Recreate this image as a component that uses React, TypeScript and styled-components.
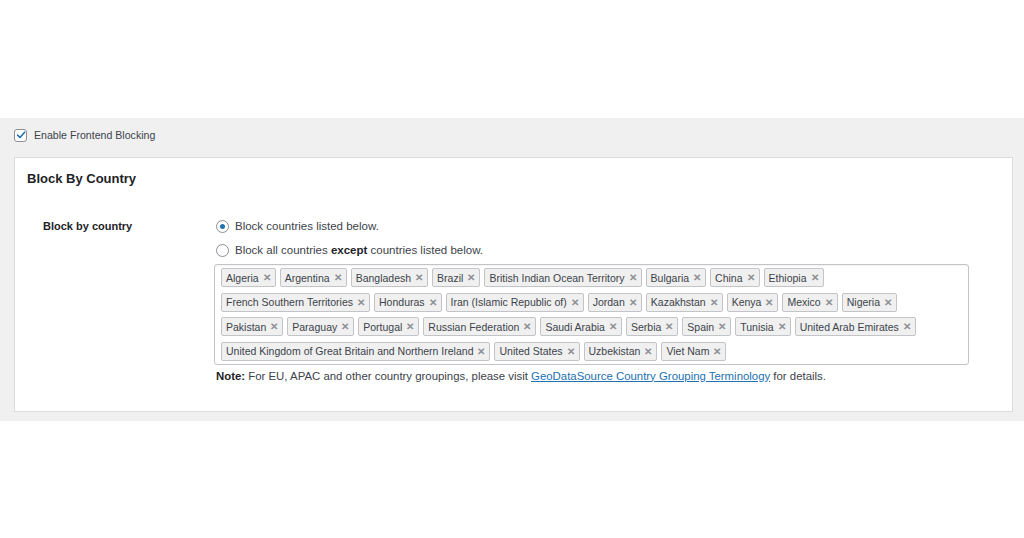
import React, { useState } from 'react';
import styled, { createGlobalStyle } from 'styled-components';

const GlobalStyle = createGlobalStyle`
  html, body {
    margin: 0;
    padding: 0;
    background: #ffffff;
    font-family: "Liberation Sans", Arial, sans-serif;
    color: #3c434a;
  }
`;

const countries = [
  'Algeria', 'Argentina', 'Bangladesh', 'Brazil', 'British Indian Ocean Territory',
  'Bulgaria', 'China', 'Ethiopia', 'French Southern Territories', 'Honduras',
  'Iran (Islamic Republic of)', 'Jordan', 'Kazakhstan', 'Kenya', 'Mexico', 'Nigeria',
  'Pakistan', 'Paraguay', 'Portugal', 'Russian Federation', 'Saudi Arabia', 'Serbia',
  'Spain', 'Tunisia', 'United Arab Emirates',
  'United Kingdom of Great Britain and Northern Ireland', 'United States', 'Uzbekistan',
  'Viet Nam',
];

const Page = styled.div`
  padding-top: 118px;
  height: 538px;
  box-sizing: border-box;
`;

const Band = styled.div`
  background: #f0f0f1;
  padding: 9px 11px 9px 14px;
`;

const CheckRow = styled.label`
  display: flex;
  align-items: center;
  gap: 7px;
  font-size: 10.6px;
  color: #3c434a;
  height: 16px;
`;

const CheckBox = styled.span`
  width: 11px;
  height: 11px;
  border: 1px solid #8c8f94;
  border-radius: 3px;
  background: #fff;
  display: flex;
  align-items: center;
  justify-content: center;
`;

const Panel = styled.div`
  margin-top: 14px;
  background: #fff;
  border: 1px solid #dcdcde;
  padding: 13px 12px 29px 12px;
`;

const Heading = styled.h2`
  margin: 0;
  font-size: 13px;
  font-weight: bold;
  color: #1d2327;
  line-height: 16px;
`;

const FormRow = styled.div`
  display: grid;
  grid-template-columns: 171px 1fr;
  margin-top: 31px;
  padding-left: 16px;
`;

const FieldLabel = styled.div`
  font-size: 11px;
  font-weight: bold;
  color: #1d2327;
  line-height: 16px;
`;

const Options = styled.div`
  display: flex;
  flex-direction: column;
`;

const RadioRow = styled.label`
  display: flex;
  align-items: center;
  gap: 6px;
  font-size: 11.5px;
  color: #3c434a;
  height: 16px;
  margin-bottom: 8px;
  padding-left: 2px;
  b { color: #1d2327; }
`;

const Radio = styled.span<{ $checked?: boolean }>`
  width: 11px;
  height: 11px;
  border: 1px solid #8c8f94;
  border-radius: 50%;
  background: #fff;
  display: flex;
  align-items: center;
  justify-content: center;
  &::after {
    content: '';
    width: 5px;
    height: 5px;
    border-radius: 50%;
    background: ${p => (p.$checked ? '#2271b1' : 'transparent')};
  }
`;

const TagBox = styled.div`
  width: 755px;
  box-sizing: border-box;
  border: 1px solid #c3c4c7;
  border-radius: 3px;
  padding: 3px 6px 3px 6px;
  display: flex;
  flex-wrap: wrap;
  column-gap: 4px;
  row-gap: 5.5px;
  box-shadow: inset 0 2px 2px -1px rgba(0, 0, 0, 0.06);
  margin-top: -2px;
`;

const Tag = styled.span`
  display: inline-flex;
  align-items: center;
  gap: 4px;
  height: 17px;
  padding: 0 4px;
  background: #f0f0f0;
  border: 1px solid #c3c4c7;
  border-radius: 2px;
  font-size: 10.5px;
  color: #3c434a;
`;

const Remove = styled.span`
  font-size: 10px;
  font-weight: bold;
  color: #8c8f94;
  cursor: pointer;
`;

const Note = styled.p`
  margin: 5px 0 0 2px;
  font-size: 11.4px;
  color: #3c434a;
  b { color: #1d2327; }
  a { color: #2271b1; text-decoration: underline; }
`;

export default function App() {
  const [mode, setMode] = useState<'only' | 'except'>('only');
  const [list, setList] = useState(countries);

  return (
    <Page>
      <GlobalStyle />
      <Band>
        <CheckRow>
          <CheckBox>
            <svg width="10" height="10" viewBox="0 0 10 10">
              <path d="M1.6 5.2 L4 7.5 L8.6 2.2" fill="none" stroke="#2271b1" strokeWidth="1.6" strokeLinecap="round" strokeLinejoin="round" />
            </svg>
          </CheckBox>
          Enable Frontend Blocking
        </CheckRow>
        <Panel>
          <Heading>Block By Country</Heading>
          <FormRow>
            <FieldLabel>Block by country</FieldLabel>
            <Options>
              <RadioRow onClick={() => setMode('only')}>
                <Radio $checked={mode === 'only'} />
                Block countries listed below.
              </RadioRow>
              <RadioRow onClick={() => setMode('except')}>
                <Radio $checked={mode === 'except'} />
                <span>Block all countries <b>except</b> countries listed below.</span>
              </RadioRow>
              <TagBox>
                {list.map(c => (
                  <Tag key={c}>
                    {c}
                    <Remove onClick={() => setList(list.filter(x => x !== c))}>✕</Remove>
                  </Tag>
                ))}
              </TagBox>
              <Note>
                <b>Note:</b> For EU, APAC and other country groupings, please visit{' '}
                <a href="#">GeoDataSource Country Grouping Terminology</a> for details.
              </Note>
            </Options>
          </FormRow>
        </Panel>
      </Band>
    </Page>
  );
}
